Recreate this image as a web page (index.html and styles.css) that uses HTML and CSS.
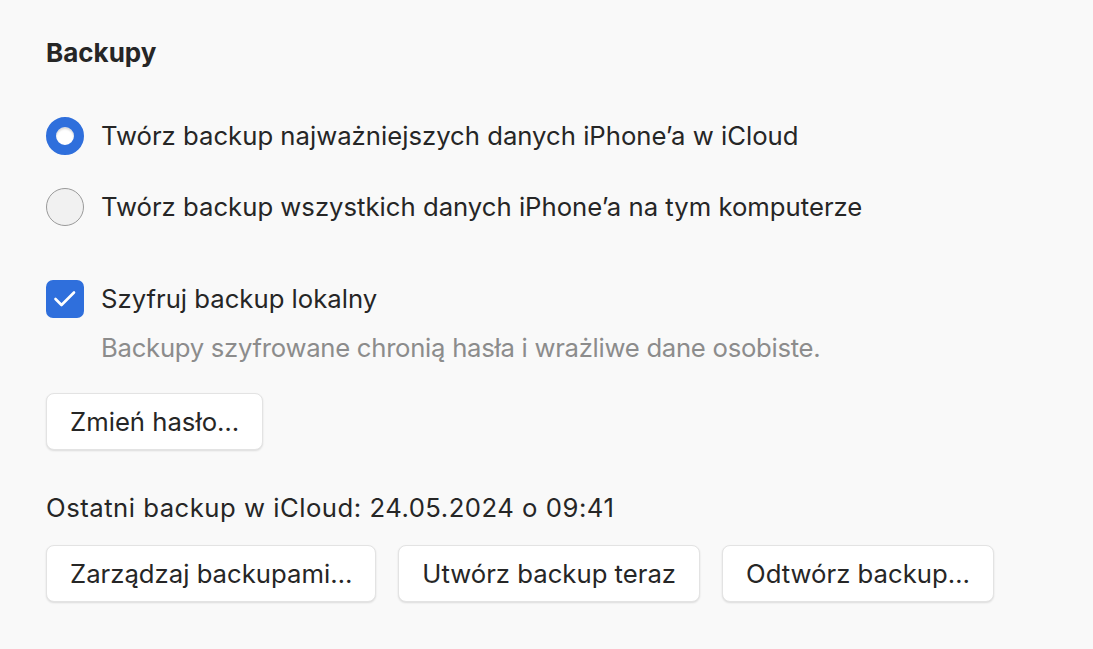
FILE: index.html
```html
<!DOCTYPE html>
<html lang="pl">
<head>
<meta charset="utf-8">
<link rel="stylesheet" href="styles.css">
</head>
<body>
<main class="panel">
  <h1 class="title">Backupy</h1>
  <div class="options">
    <div class="row">
      <span class="radio radio-on"></span>
      <span class="label">Twórz backup najważniejszych danych iPhone’a w iCloud</span>
    </div>
    <div class="row">
      <span class="radio"></span>
      <span class="label">Twórz backup wszystkich danych iPhone’a na tym komputerze</span>
    </div>
  </div>
  <div class="encrypt">
    <div class="row">
      <span class="check">
        <svg viewBox="0 0 38 38" width="38" height="38"><path d="M9.5 19 L15.5 25 L28 12.5" fill="none" stroke="#fff" stroke-width="2.6" stroke-linecap="round" stroke-linejoin="round"/></svg>
      </span>
      <span class="label">Szyfruj backup lokalny</span>
    </div>
    <p class="hint">Backupy szyfrowane chronią hasła i wrażliwe dane osobiste.</p>
  </div>
  <div class="btnrow first">
    <button class="btn">Zmień hasło…</button>
  </div>
  <p class="last">Ostatni backup w iCloud: 24.05.2024 o 09:41</p>
  <div class="btnrow">
    <button class="btn">Zarządzaj backupami…</button>
    <button class="btn">Utwórz backup teraz</button>
    <button class="btn">Odtwórz backup…</button>
  </div>
</main>
</body>
</html>
```
FILE: styles.css
```css
* { box-sizing: border-box; }
html, body { margin: 0; padding: 0; }
body {
  width: 1093px;
  height: 649px;
  background: #f9f9f9;
  font-family: Inter, "Noto Sans", "Liberation Sans", sans-serif;
  color: #262626;
  overflow: hidden;
}
.panel {
  padding: 37px 0 0 46px;
  display: flex;
  flex-direction: column;
}
.title {
  margin: 0;
  font-size: 26px;
  font-weight: 700;
  line-height: 32px;
  color: #262626;
}
.options {
  margin-top: 47px;
  display: flex;
  flex-direction: column;
  gap: 32px;
}
.row {
  display: flex;
  align-items: center;
  gap: 17px;
  height: 39px;
}
.label {
  font-size: 25.7px;
  line-height: 30px;
}
.radio {
  width: 38px;
  height: 38px;
  border-radius: 50%;
  background: #f1f1f1;
  border: 1.5px solid #9a9a9a;
  flex: none;
}
.radio-on {
  background: #ffffff;
  border: 10px solid #2f6fdc;
  box-shadow: inset 0 2px 2px rgba(0,0,0,0.15);
}
.encrypt {
  margin-top: 53px;
  display: flex;
  flex-direction: column;
}
.check {
  width: 38px;
  height: 38px;
  border-radius: 7px;
  background: #2f6fdc;
  display: flex;
  align-items: center;
  justify-content: center;
  flex: none;
}
.check svg { display: block; }
.hint {
  margin: 15px 0 0 55px;
  font-size: 25.7px;
  line-height: 30px;
  letter-spacing: -0.28px;
  color: #8c8c8c;
}
.btnrow {
  display: flex;
  gap: 22px;
}
.btnrow.first { margin-top: 30px; }
.btn {
  height: 57px;
  padding: 0 23px;
  background: #ffffff;
  border: 1px solid #e3e3e3;
  border-radius: 8px;
  box-shadow: 0 1px 2px rgba(0,0,0,0.12);
  font-family: inherit;
  font-size: 25.7px;
  color: #262626;
}
.last {
  margin: 43px 0 22px;
  font-size: 25.7px;
  line-height: 30px;
  letter-spacing: 0.5px;
}
```
